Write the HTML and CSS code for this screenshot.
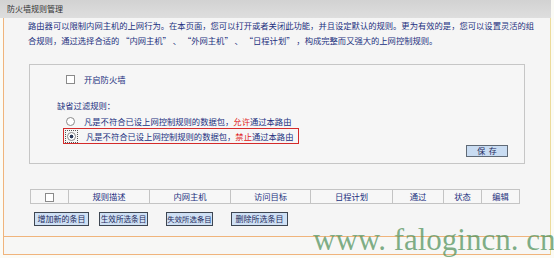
FILE: index.html
```html
<!DOCTYPE html>
<html lang="zh-CN">
<head>
<meta charset="utf-8">
<title>防火墙规则管理</title>
<link rel="stylesheet" href="styles.css">
</head>
<body>
<div class="page">
  <div class="title">防火墙规则管理</div>
  <div class="panel">
    <p class="intro">路由器可以限制内网主机的上网行为。在本页面，您可以打开或者关闭此功能，并且设定默认的规则。更为有效的是，您可以设置灵活的组合规则，通过选择合适的 “内网主机” 、 “外网主机” 、 “日程计划” ，构成完整而又强大的上网控制规则。</p>
    <div class="box">
      <div class="row row-enable"><span class="check"></span><span>开启防火墙</span></div>
      <div class="row row-label">缺省过滤规则：</div>
      <div class="row row-radio"><span class="radio"></span><span>凡是不符合已设上网控制规则的数据包，<span class="red">允许</span>通过本路由</span></div>
      <div class="row row-radio row-selected"><span class="focus"><span class="radio radio-on"></span></span><span>凡是不符合已设上网控制规则的数据包，<span class="red">禁止</span>通过本路由</span></div>
      <div class="save-row"><span class="btn btn-save">保&nbsp;&nbsp;存</span></div>
    </div>
    <table class="rules">
      <tr>
        <th class="c-chk"><span class="check"></span></th>
        <th class="c-desc">规则描述</th>
        <th class="c-lan">内网主机</th>
        <th class="c-wan">访问目标</th>
        <th class="c-sched">日程计划</th>
        <th class="c-pass">通过</th>
        <th class="c-state">状态</th>
        <th class="c-edit">编辑</th>
      </tr>
    </table>
    <div class="actions">
      <span class="btn btn-add">增加新的条目</span>
      <span class="btn btn-on">生效所选条目</span>
      <span class="btn btn-off">失效所选条目</span>
      <span class="btn btn-del">删除所选条目</span>
    </div>
    <div class="footer"></div>
  </div>
  <div class="watermark">www. falogincn. cn</div>
</div>
</body>
</html>
```

FILE: styles.css
```css
html, body {
  margin: 0;
  padding: 0;
  background: #fbfbf6;
}
body {
  font-family: "Noto Sans CJK SC", "Noto Sans", sans-serif;
  font-size: 8.3px;
  color: #22307e;
}
.page {
  position: relative;
  width: 554px;
  height: 258px;
  overflow: hidden;
}
.title {
  width: 544px;
  height: 18px;
  line-height: 18px;
  padding-left: 7px;
  background: linear-gradient(#d2d2d2, #dedede);
  color: #333;
  font-size: 8px;
}
.panel {
  margin-left: 3px;
  width: 546px;
  height: 236px;
  background: #f5f5f5;
  border-left: 1px solid #f0b47c;
  border-right: 1px solid #ecdc9c;
  border-bottom: 1px solid #f0b47c;
}
.intro {
  margin: 0;
  padding: 0 10px 0 24px;
  width: 512px;
  line-height: 15px;
}
.box {
  margin: 16px 0 0 25px;
  width: 494px;
  height: 98px;
  border: 1px solid #c6c6c6;
  background: #f6f6f6;
}
.row {
  display: flex;
  align-items: center;
  height: 14px;
  line-height: 14px;
}
.row-enable {
  margin-top: 7px;
  margin-left: 36px;
  gap: 9px;
}
.row-label {
  margin-top: 12px;
  margin-left: 27px;
}
.row-radio {
  margin-top: 2px;
  margin-left: 34px;
  width: 233px;
  padding-left: 2px;
  gap: 9px;
}
.row-selected {
  margin-top: 0;
  margin-left: 33px;
  padding-left: 1px;
  height: 14px;
  border: 1px solid #d42a2a;
  gap: 8px;
}
.check {
  display: inline-block;
  width: 7px;
  height: 7px;
  border: 1px solid #8a8a8a;
  background: #fff;
}
.radio {
  display: inline-block;
  box-sizing: border-box;
  width: 9px;
  height: 9px;
  border: 1px solid #8a8a8a;
  border-radius: 50%;
  background: #fff;
}
.radio-on {
  background: radial-gradient(circle, #2a3a5a 0 1.6px, #fff 2.2px);
}
.focus {
  display: inline-flex;
  padding: 1px;
  border: 1px dotted #555;
}
.red {
  color: #e02020;
}
.save-row {
  display: flex;
  justify-content: flex-end;
  margin-top: 1px;
  padding-right: 16px;
}
.btn {
  display: inline-block;
  box-sizing: border-box;
  height: 14px;
  line-height: 12px;
  text-align: center;
  background: #cfe0f4;
  border: 1px solid #3e4652;
  color: #1e2a5c;
  font-size: 8px;
  white-space: nowrap;
}
.btn-save {
  width: 42px;
  height: 12px;
  line-height: 10px;
  background: #c9dcf2;
  border-color: #606a76;
}
.rules {
  margin: 25px 0 0 26px;
  border-collapse: collapse;
  table-layout: fixed;
  width: 481px;
}
.rules th {
  height: 13px;
  padding: 0;
  border: 1px solid #c4c4c4;
  background: #f7f7f7;
  font-weight: normal;
  line-height: 13px;
  text-align: center;
}
.rules .check {
  vertical-align: middle;
}
.c-chk { width: 37px; }
.c-desc { width: 80px; }
.c-lan { width: 80px; }
.c-wan { width: 79px; }
.c-sched { width: 81px; }
.c-pass { width: 50px; }
.c-state { width: 37px; }
.c-edit { width: 37px; }
.actions {
  display: flex;
  margin: 8px 0 0 30px;
}
.btn-add { width: 55px; }
.btn-on { width: 49px; margin-left: 10px; font-size: 7.6px; }
.btn-off { width: 47px; margin-left: 18px; font-size: 7.4px; }
.btn-del { width: 57px; margin-left: 18px; }
.footer {
  margin-top: 10px;
  height: 17px;
  border-top: 1px solid #f0b47c;
  background: #f7f7f5;
}
.watermark {
  position: absolute;
  left: 313px;
  top: 223px;
  font-family: "Liberation Serif", serif;
  font-size: 31px;
  line-height: 34px;
  color: rgba(80, 145, 90, 0.72);
  white-space: nowrap;
}
```
